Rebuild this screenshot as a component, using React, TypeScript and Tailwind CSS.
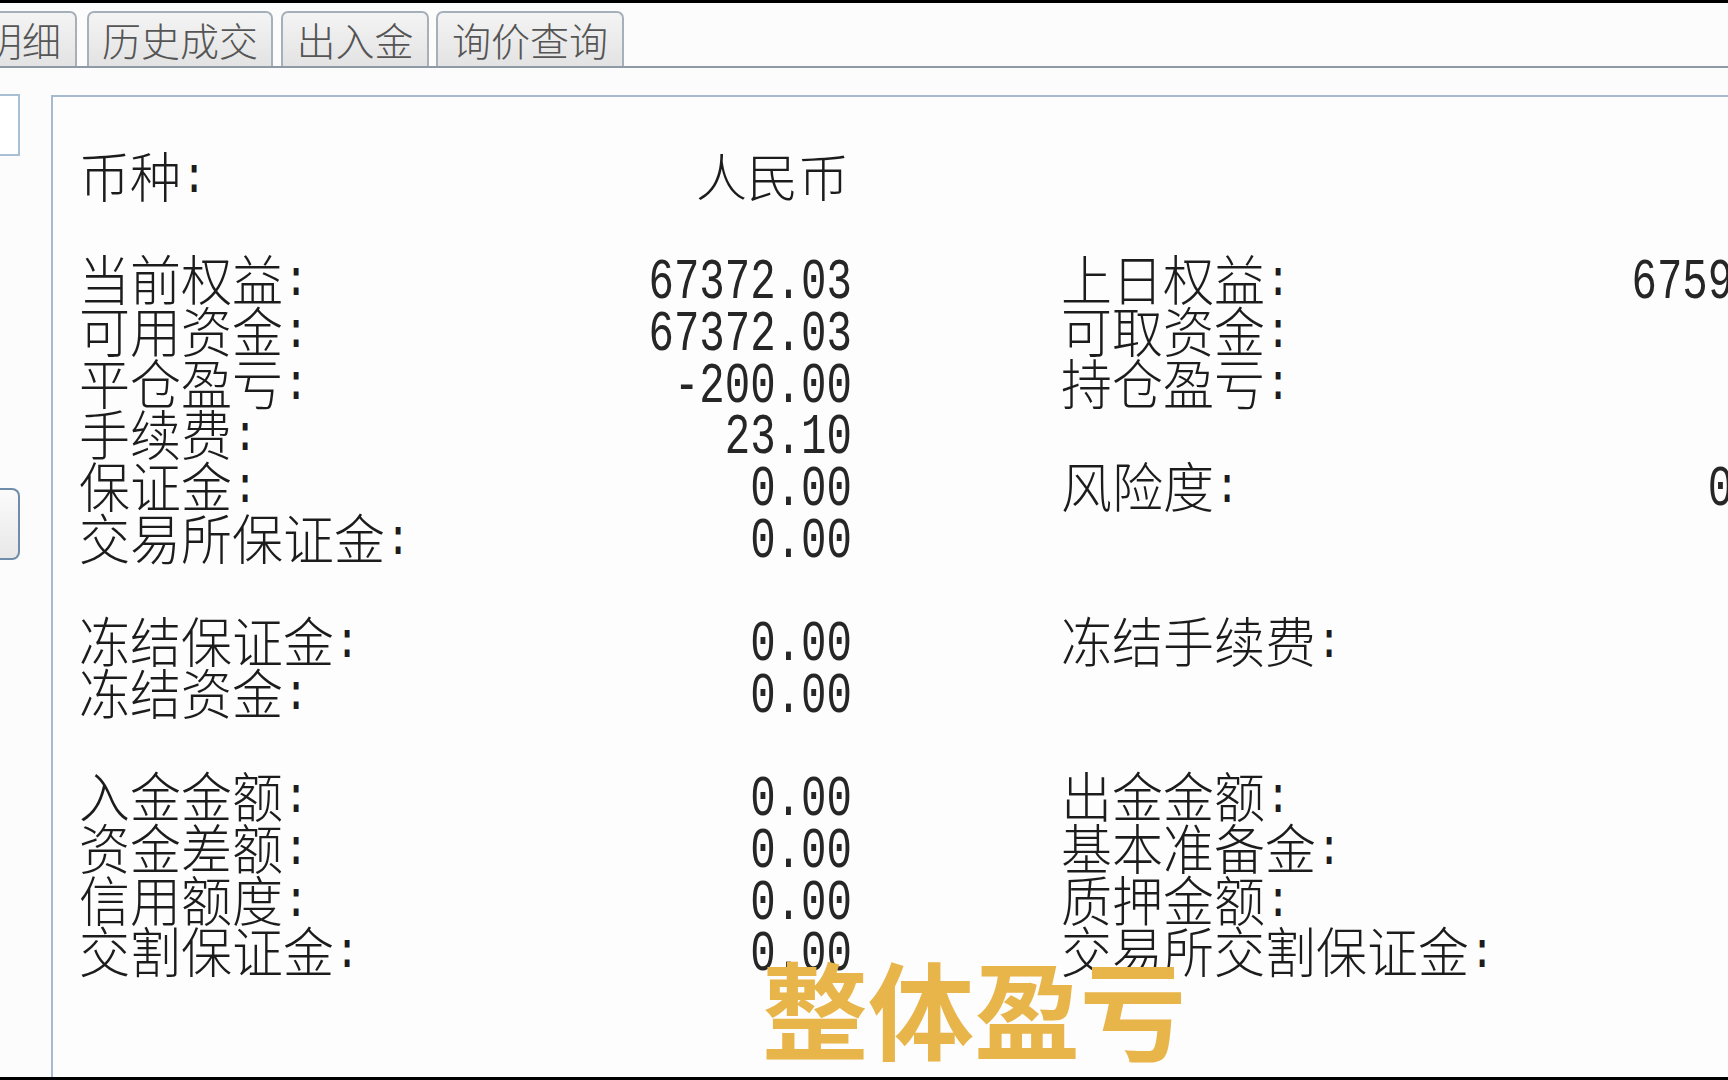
import React from "react";

type Row = [string, string, string, string] | null;

const rows: Row[] = [
  ["币种:", "人民币", "", ""],
  null,
  ["当前权益:", "67372.03", "上日权益:", "67595.13"],
  ["可用资金:", "67372.03", "可取资金:", ""],
  ["平仓盈亏:", "-200.00", "持仓盈亏:", ""],
  ["手续费:", "23.10", "", ""],
  ["保证金:", "0.00", "风险度:", "0.00%"],
  ["交易所保证金:", "0.00", "", ""],
  null,
  ["冻结保证金:", "0.00", "冻结手续费:", ""],
  ["冻结资金:", "0.00", "", ""],
  null,
  ["入金金额:", "0.00", "出金金额:", ""],
  ["资金差额:", "0.00", "基本准备金:", ""],
  ["信用额度:", "0.00", "质押金额:", ""],
  ["交割保证金:", "0.00", "交易所交割保证金:", ""],
];

const cjk = "font-['Noto_Sans_CJK_SC',sans-serif]";
const mono = "font-['Liberation_Mono','DejaVu_Sans_Mono',monospace]";

function Label({ text }: { text: string }) {
  if (!text) return <span />;
  const body = text.endsWith(":") ? text.slice(0, -1) : text;
  return (
    <span className="flex items-center whitespace-nowrap">
      <span className={`${cjk} font-light text-[51px] leading-[51.7px] inline-block scale-y-[1.06]`}>{body}</span>
      {text.endsWith(":") && (
        <span className={`${mono} inline-block w-[26px] text-center text-[42px] leading-[51.7px] scale-y-125 translate-y-[3px]`}>:</span>
      )}
    </span>
  );
}

function Value({ text }: { text: string }) {
  if (!text) return <span />;
  if (/[\u4e00-\u9fa5]/.test(text)) {
    return <span className={`${cjk} font-light text-[51px] leading-[51.7px] mr-[3px]`}>{text}</span>;
  }
  return (
    <span className={`${mono} inline-block text-[42.4px] leading-[51.7px] scale-y-[1.36] translate-y-[5px] whitespace-nowrap text-[#262626]`}>
      {text}
    </span>
  );
}

function Tab({ label, className }: { label: string; className: string }) {
  return (
    <div
      className={`h-[55px] flex items-center border-2 border-b-0 border-[#a6b0ba] rounded-t-[7px] bg-gradient-to-b from-[#f4f4f4] to-[#e3e3e3] text-[#555555] ${cjk} font-light text-[39px] leading-none whitespace-nowrap overflow-hidden ${className}`}
    >
      {label}
    </div>
  );
}

export default function App() {
  return (
    <div className="relative w-[1728px] h-[1080px] overflow-hidden bg-[#fcfcfd] border-t-[3px] border-b-[3px] border-black flex flex-col text-[#1c1c1c]">
      {/* tab strip */}
      <div className="h-[65px] shrink-0 flex items-end border-b-2 border-[#8e9aa5]">
        <Tab label="明细" className="ml-[-20px] w-[97px] justify-end pr-[14px]" />
        <Tab label="历史成交" className="ml-[10px] w-[186px] justify-center" />
        <Tab label="出入金" className="ml-[8px] w-[148px] justify-center" />
        <Tab label="询价查询" className="ml-[7px] w-[188px] justify-center" />
      </div>

      <div className="flex-1 flex min-h-0">
        {/* left pane edge */}
        <div className="w-[20px] shrink-0 flex flex-col">
          <div className="mt-[26px] h-[62px] border-2 border-l-0 border-[#a9bfd3] bg-white" />
          <div className="mt-[332px] h-[72px] border-2 border-l-0 border-[#6f8cab] rounded-r-[8px] bg-gradient-to-b from-[#fbfbfb] to-[#e8e8e8]" />
        </div>

        {/* account panel */}
        <div className="ml-[31px] mt-[27px] flex-1 border-l-2 border-t-2 border-[#a6bbd0] bg-[#fdfdfd] pl-[26px] pt-[53px] overflow-hidden">
          <div className="flex flex-col w-[1800px]">
            {rows.map((r, i) =>
              r ? (
                <div key={i} className="h-[51.7px] flex items-center">
                  <div className="w-[773px] flex items-center justify-between">
                    <Label text={r[0]} />
                    <Value text={r[1]} />
                  </div>
                  <div className="ml-[209px] w-[774px] flex items-center justify-between">
                    <Label text={r[2]} />
                    <Value text={r[3]} />
                  </div>
                </div>
              ) : (
                <div key={i} className="h-[51.7px]" />
              )
            )}
          </div>
        </div>
      </div>

      {/* subtitle overlay */}
      <div
        className={`absolute left-[762px] top-[950px] ${cjk} font-bold text-[106px] leading-none text-[#e8b54b] whitespace-nowrap`}
      >
        整体盈亏
      </div>
    </div>
  );
}
